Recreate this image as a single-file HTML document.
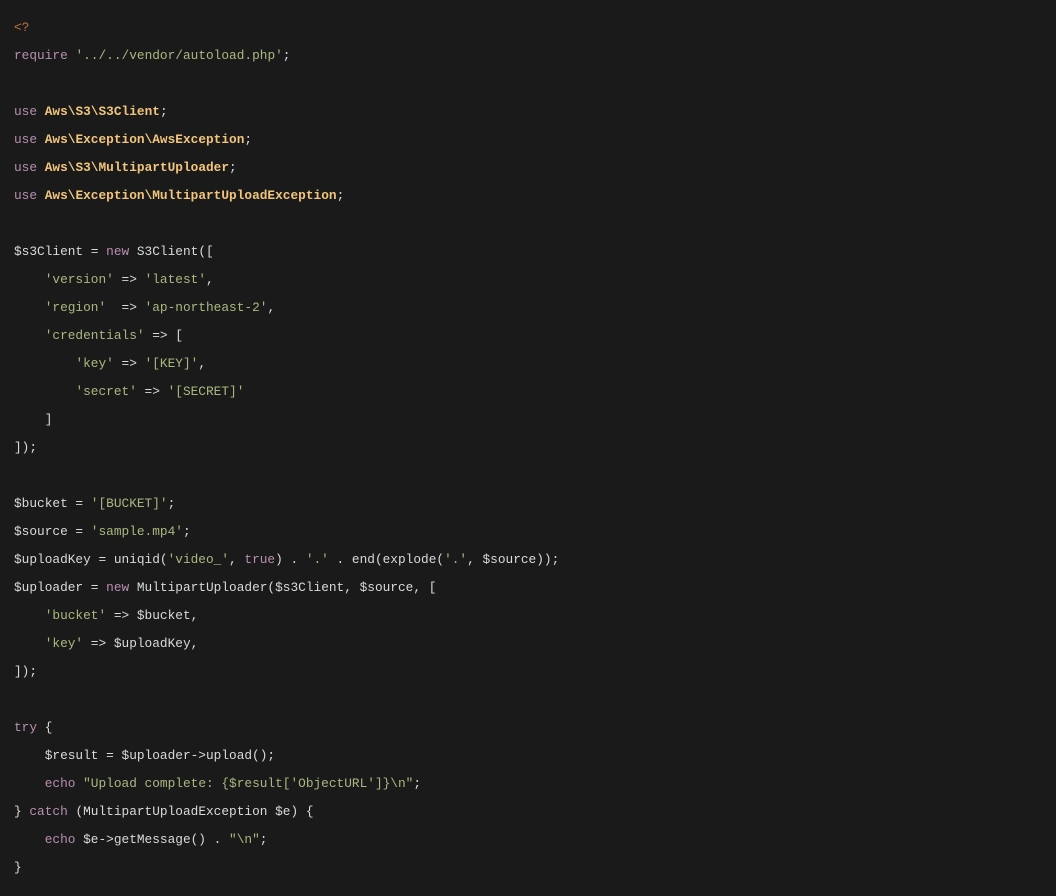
<!DOCTYPE html>
<html><head><meta charset="utf-8"><style>
html,body{margin:0;padding:0;background:#1a1a1a;width:1056px;height:896px;overflow:hidden}
pre{margin:0;padding:14px 0 0 14px;font-family:"Liberation Mono",monospace;font-size:12.8px;line-height:28px;color:#dadada;white-space:pre}
.k{color:#b78fb0}.s{color:#a8b97f}.c{color:#f2c57c;font-weight:bold}.t{color:#c0733f}
</style></head><body><pre><span class="t">&lt;?</span>
<span class="k">require</span> <span class="s">'../../vendor/autoload.php'</span>;

<span class="k">use</span> <span class="c">Aws\S3\S3Client</span>;
<span class="k">use</span> <span class="c">Aws\Exception\AwsException</span>;
<span class="k">use</span> <span class="c">Aws\S3\MultipartUploader</span>;
<span class="k">use</span> <span class="c">Aws\Exception\MultipartUploadException</span>;

$s3Client = <span class="k">new</span> S3Client([
    <span class="s">'version'</span> =&gt; <span class="s">'latest'</span>,
    <span class="s">'region'</span>  =&gt; <span class="s">'ap-northeast-2'</span>,
    <span class="s">'credentials'</span> =&gt; [
        <span class="s">'key'</span> =&gt; <span class="s">'[KEY]'</span>,
        <span class="s">'secret'</span> =&gt; <span class="s">'[SECRET]'</span>
    ]
]);

$bucket = <span class="s">'[BUCKET]'</span>;
$source = <span class="s">'sample.mp4'</span>;
$uploadKey = uniqid(<span class="s">'video_'</span>, <span class="k">true</span>) . <span class="s">'.'</span> . end(explode(<span class="s">'.'</span>, $source));
$uploader = <span class="k">new</span> MultipartUploader($s3Client, $source, [
    <span class="s">'bucket'</span> =&gt; $bucket,
    <span class="s">'key'</span> =&gt; $uploadKey,
]);

<span class="k">try</span> {
    $result = $uploader-&gt;upload();
    <span class="k">echo</span> <span class="s">"Upload complete: {$result['ObjectURL']}\n"</span>;
} <span class="k">catch</span> (MultipartUploadException $e) {
    <span class="k">echo</span> $e-&gt;getMessage() . <span class="s">"\n"</span>;
}</pre></body></html>
